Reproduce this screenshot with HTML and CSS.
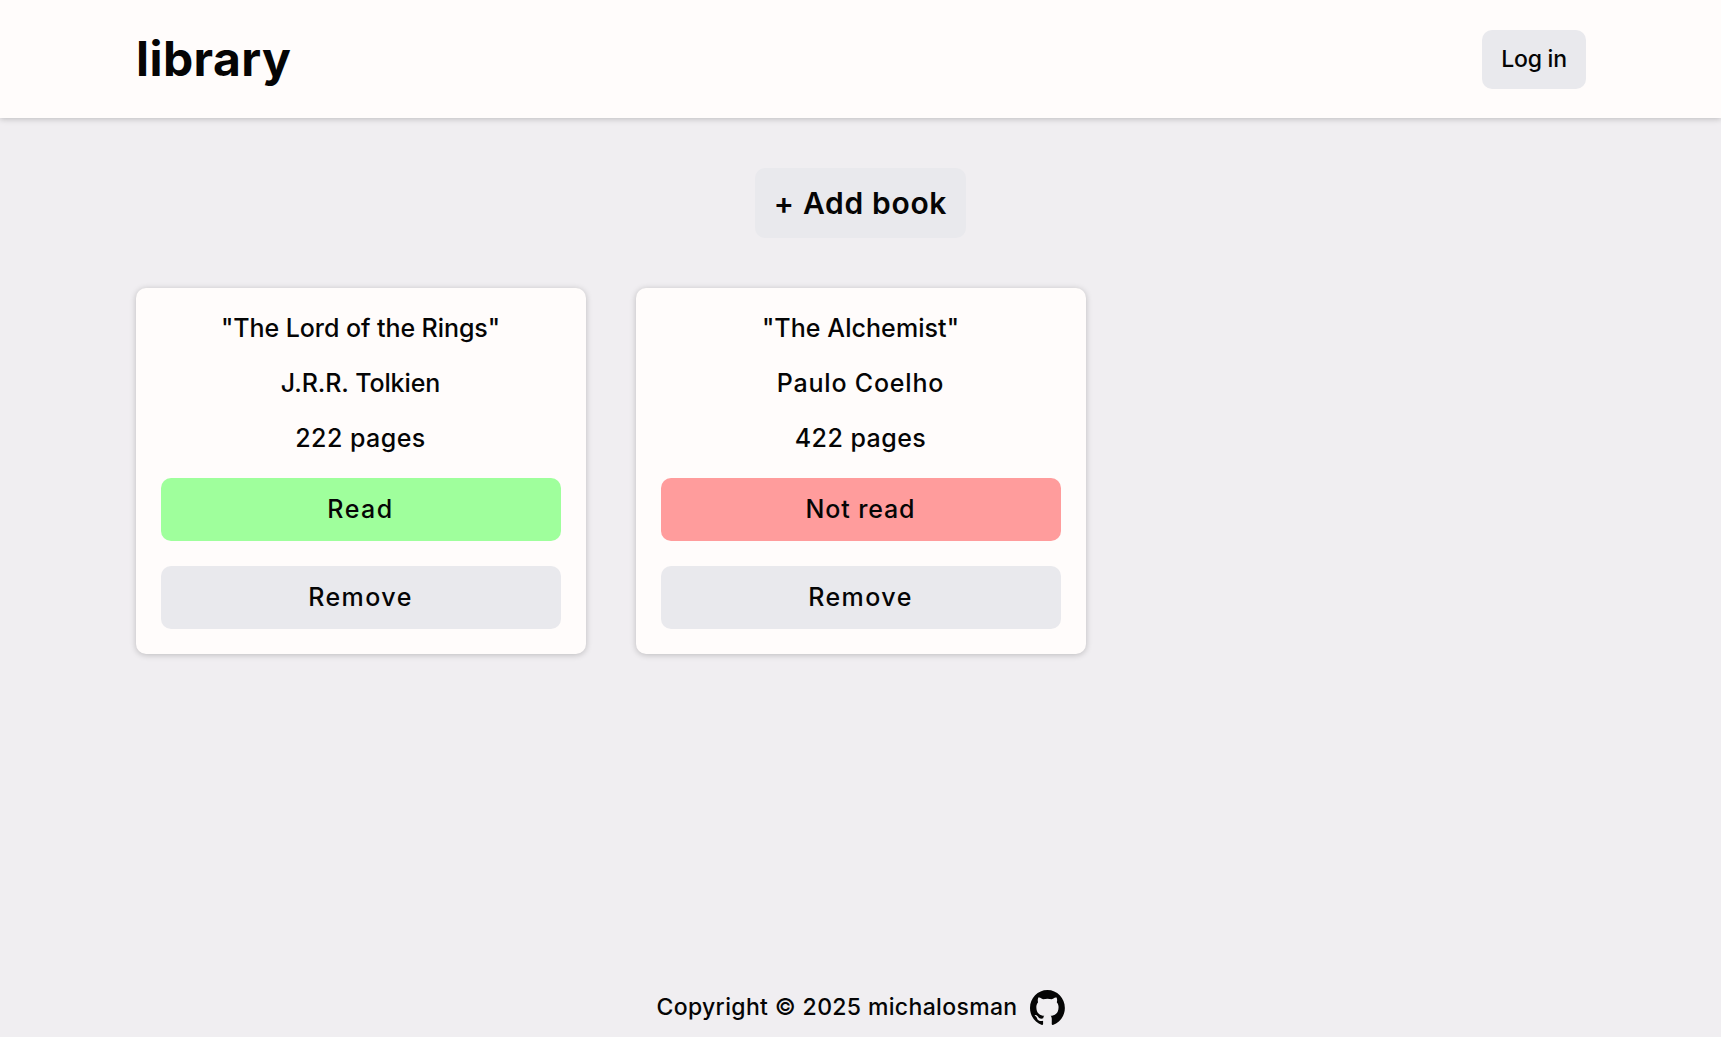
FILE: index.html
```html
<!DOCTYPE html>
<html lang="en">
<head>
  <meta charset="UTF-8">
  <meta name="viewport" content="width=device-width, initial-scale=1">
  <title>Library</title>
  <link rel="stylesheet" href="styles.css">
</head>
<body>
  <header class="header">
    <h1 class="logo">library</h1>
    <button class="button button-login" type="button">Log in</button>
  </header>
  <main class="main">
    <button class="button button-add" type="button">+ Add book</button>
    <div class="books">
      <article class="book">
        <p class="book-title">"The Lord of the Rings"</p>
        <p class="book-author-initials">J.R.R. Tolkien</p>
        <p class="book-pages">222 pages</p>
        <button class="button button-read" type="button">Read</button>
        <button class="button button-remove" type="button">Remove</button>
      </article>
      <article class="book">
        <p class="book-title-short">"The Alchemist"</p>
        <p class="book-author">Paulo Coelho</p>
        <p class="book-pages">422 pages</p>
        <button class="button button-unread" type="button">Not read</button>
        <button class="button button-remove" type="button">Remove</button>
      </article>
    </div>
  </main>
  <footer class="footer">
    <p class="copyright">Copyright © 2025 michalosman</p>
    <svg class="github" viewBox="0 0 98 96" preserveAspectRatio="none" role="img" aria-label="GitHub"><path fill="currentColor" fill-rule="evenodd" d="M48.854 0C21.839 0 0 22 0 49.217c0 21.756 13.993 40.172 33.405 46.69 2.427.49 3.316-1.059 3.316-2.362 0-1.141-.08-5.052-.08-9.127-13.59 2.934-16.42-5.867-16.42-5.867-2.184-5.704-5.42-7.17-5.42-7.17-4.448-3.015.324-3.015.324-3.015 4.934.326 7.523 5.052 7.523 5.052 4.367 7.496 11.404 5.378 14.235 4.074.404-3.178 1.699-5.378 3.074-6.6-10.839-1.141-22.243-5.378-22.243-24.283 0-5.378 1.94-9.778 5.014-13.2-.485-1.222-2.184-6.275.486-13.038 0 0 4.125-1.304 13.426 5.052a46.97 46.97 0 0 1 12.214-1.63c4.125 0 8.33.571 12.213 1.63 9.302-6.356 13.427-5.052 13.427-5.052 2.67 6.763.97 11.816.485 13.038 3.155 3.422 5.015 7.822 5.015 13.2 0 18.905-11.404 23.06-22.324 24.283 1.78 1.548 3.316 4.481 3.316 9.126 0 6.6-.08 11.897-.08 13.526 0 1.304.89 2.853 3.316 2.364 19.412-6.52 33.405-24.935 33.405-46.691C97.707 22 75.788 0 48.854 0z"/></svg>
  </footer>
</body>
</html>
```
FILE: styles.css
```css
* {
  box-sizing: border-box;
  margin: 0;
  padding: 0;
}

body {
  display: flex;
  flex-direction: column;
  min-height: 100vh;
  background: #f0eef1;
  color: #050505;
  font-family: Inter, "Liberation Sans", sans-serif;
  font-weight: 500;
}

.header {
  display: flex;
  justify-content: space-between;
  align-items: center;
  height: 118px;
  padding: 0 135px 0 136px;
  background: #fffcfb;
  box-shadow: 0 1px 6px rgba(0, 0, 0, 0.22);
}

.logo {
  font-size: 48px;
  font-weight: 700;
  line-height: 58px;
  letter-spacing: 0.43px;
}

.button {
  border: 0;
  border-radius: 10px;
  background: #e9e9ed;
  color: inherit;
  font: inherit;
  cursor: pointer;
}

.button-login {
  width: 104px;
  height: 59px;
  font-size: 23px;
  letter-spacing: -0.22px;
}

.main {
  display: flex;
  flex: 1;
  flex-direction: column;
  align-items: center;
  gap: 50px;
  padding-top: 50px;
}

.button-add {
  width: 211px;
  height: 70px;
  font-size: 30px;
  font-weight: 600;
  letter-spacing: 0.68px;
}

.books {
  display: grid;
  grid-template-columns: repeat(3, 450px);
  gap: 50px;
}

.book {
  display: flex;
  flex-direction: column;
  gap: 25px;
  padding: 25px;
  border-radius: 10px;
  background: #fffcfb;
  box-shadow: 0 1px 6px rgba(0, 0, 0, 0.22);
  font-size: 25px;
  line-height: 30px;
  text-align: center;
}

.book .button {
  height: 63px;
  padding-bottom: 2px;
}

.book-title {
  letter-spacing: -0.07px;
}

.book-title-short {
  letter-spacing: 0.07px;
}

.book-author-initials {
  letter-spacing: -0.1px;
}

.book-author {
  letter-spacing: 0.8px;
}

.book-pages {
  letter-spacing: 0.45px;
}

.book .button-read {
  background: #9fff9c;
  letter-spacing: 1.5px;
}

.book .button-unread {
  background: #ff9c9c;
  letter-spacing: 0.85px;
}

.book .button-remove {
  letter-spacing: 1.45px;
}

.footer {
  display: flex;
  justify-content: center;
  align-items: center;
  gap: 12px;
  padding-bottom: 12px;
}

.copyright {
  font-size: 23px;
  line-height: 35px;
  letter-spacing: 0.35px;
}

.github {
  width: 35px;
  height: 35px;
}
```
